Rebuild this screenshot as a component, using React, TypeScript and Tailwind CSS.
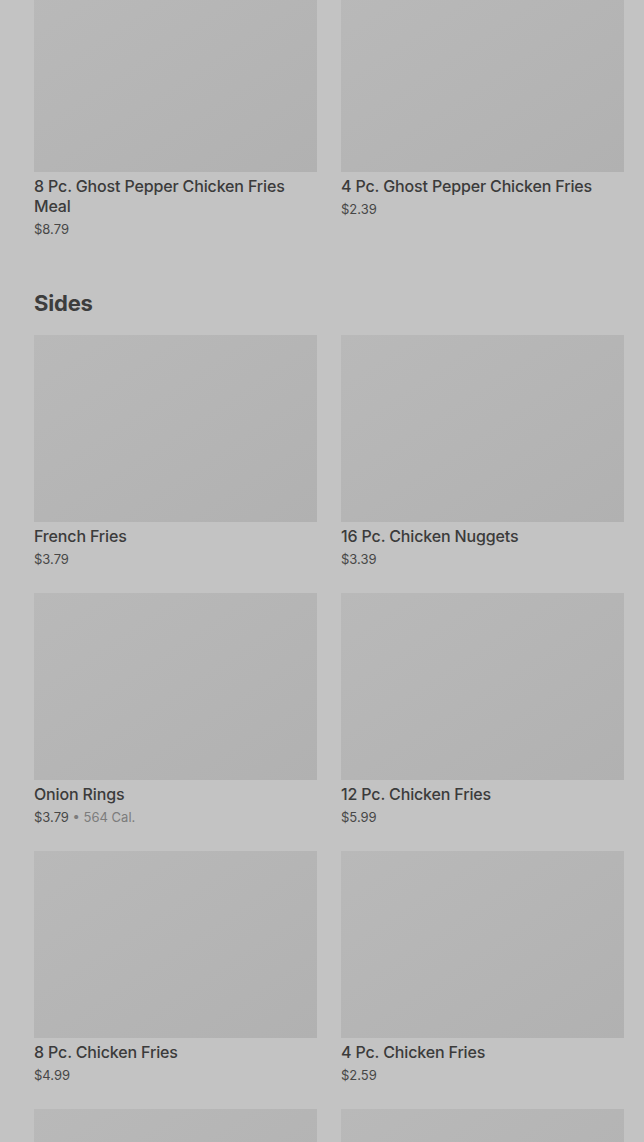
import React from "react";

type Item = { name: string; price: string; cal?: string };

const top: Item[] = [
  { name: "8 Pc. Ghost Pepper Chicken Fries Meal", price: "$8.79" },
  { name: "4 Pc. Ghost Pepper Chicken Fries", price: "$2.39" },
];

const sides: Item[] = [
  { name: "French Fries", price: "$3.79" },
  { name: "16 Pc. Chicken Nuggets", price: "$3.39" },
  { name: "Onion Rings", price: "$3.79", cal: "564 Cal." },
  { name: "12 Pc. Chicken Fries", price: "$5.99" },
  { name: "8 Pc. Chicken Fries", price: "$4.99" },
  { name: "4 Pc. Chicken Fries", price: "$2.59" },
  { name: "", price: "" },
  { name: "", price: "" },
];

function Card({ item }: { item: Item }) {
  return (
    <div className="flex flex-col">
      <div className="w-full h-[187px] bg-gradient-to-br from-[#b9b9b9] to-[#b1b1b1]" />
      {item.name && (
        <div className="pt-1">
          <div className="text-[16px] leading-[20px] font-medium text-[#3b3b3b] tracking-[-0.15px]">
            {item.name}
          </div>
          <div className="mt-1 text-[13px] leading-[18px] text-[#474747]">
            {item.price}
            {item.cal && (
              <span className="text-[#7c7c7c]">
                {" "}
                • {item.cal}
              </span>
            )}
          </div>
        </div>
      )}
    </div>
  );
}

export default function App() {
  return (
    <div
      className="w-[644px] h-[1142px] overflow-hidden bg-[#c3c3c3]"
      style={{ fontFamily: "Inter, 'Liberation Sans', sans-serif" }}
    >
      <div className="pl-[34px] pr-[20px]">
        <div className="-mt-[15px] grid grid-cols-2 gap-x-[24px]">
          {top.map((it, i) => (
            <Card key={i} item={it} />
          ))}
        </div>
        <h2 className="mt-[49px] mb-[16px] text-[22px] leading-[32px] font-bold text-[#3d3d3d] tracking-[-0.2px]">
          Sides
        </h2>
        <div className="grid grid-cols-2 gap-x-[24px] gap-y-[25px]">
          {sides.map((it, i) => (
            <Card key={i} item={it} />
          ))}
        </div>
      </div>
    </div>
  );
}
